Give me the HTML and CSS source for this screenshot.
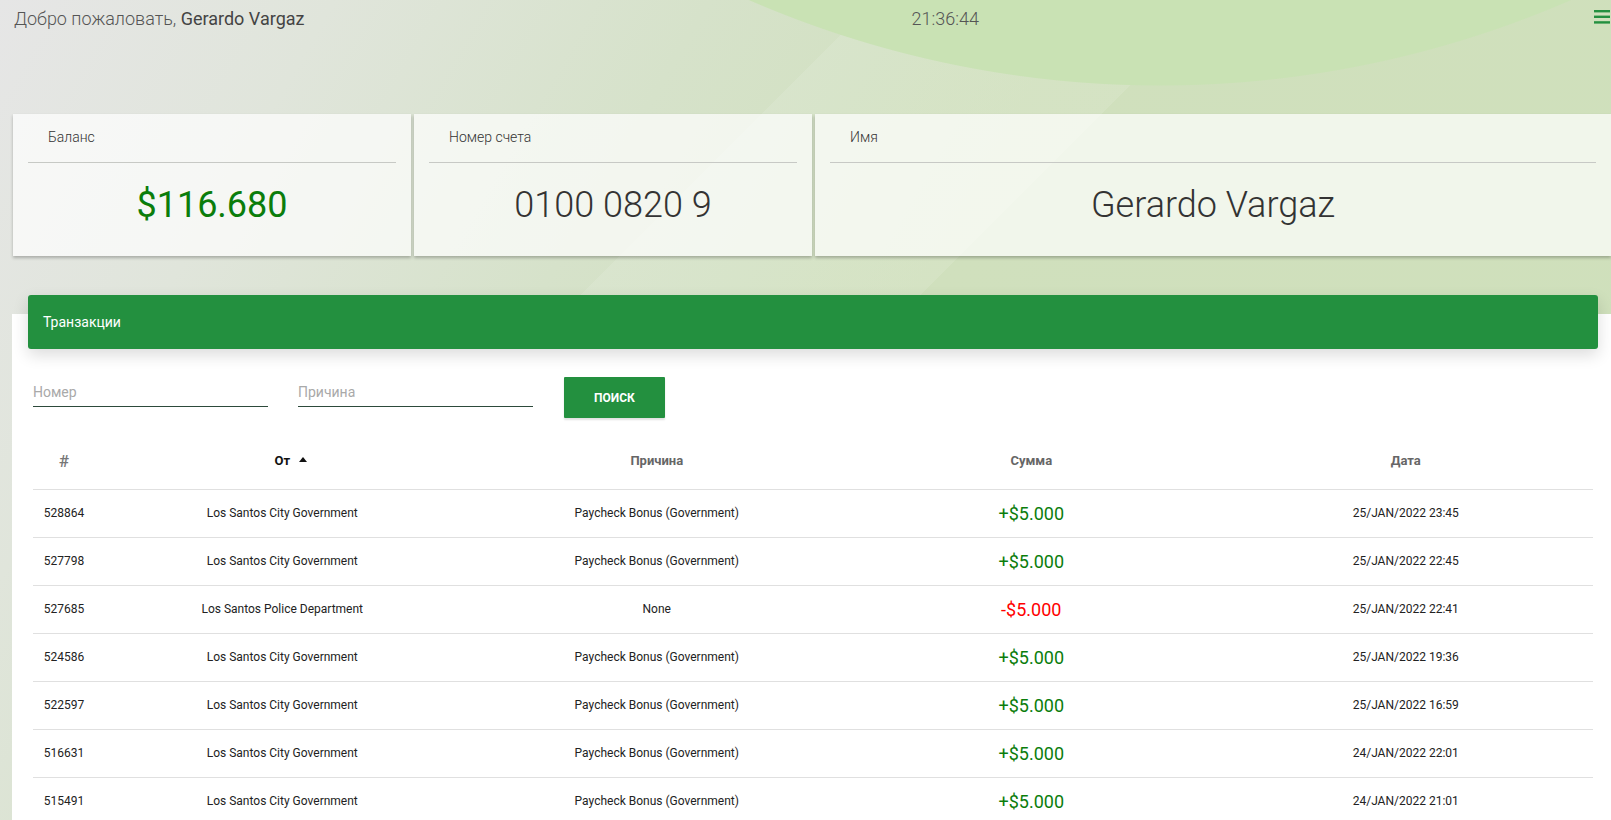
FILE: index.html
```html
<!DOCTYPE html>
<html lang="ru">
<head>
  <meta charset="UTF-8">
  <title>Банк</title>
  <link rel="stylesheet" href="styles.css">
</head>
<body>
  <!-- Верхняя строка: приветствие, часы, меню -->
  <header class="topbar">
    <div class="welcome">Добро пожаловать, <span class="welcome-name">Gerardo Vargaz</span></div>
    <div class="clock" id="clock">21:36:44</div>
    <button class="menu-btn" type="button" aria-label="Меню">
      <svg width="16" height="14" viewBox="0 0 16 14">
        <rect x="0" y="0" width="16" height="2.4" fill="#23903f"/>
        <rect x="0" y="5.6" width="16" height="2.4" fill="#23903f"/>
        <rect x="0" y="11.2" width="16" height="2.4" fill="#23903f"/>
      </svg>
    </button>
  </header>

  <!-- Карточки с информацией о счёте -->
  <section class="info-cards">
    <div class="info-card">
      <div class="info-title">Баланс</div>
      <div class="info-value balance">$116.680</div>
    </div>
    <div class="info-card">
      <div class="info-title">Номер счета</div>
      <div class="info-value">0100 0820 9</div>
    </div>
    <div class="info-card">
      <div class="info-title">Имя</div>
      <div class="info-value">Gerardo Vargaz</div>
    </div>
  </section>

  <!-- Блок транзакций -->
  <section class="transactions">
    <div class="transactions-header">Транзакции</div>

    <form class="search-row">
      <input class="search-input" type="text" placeholder="Номер">
      <input class="search-input" type="text" placeholder="Причина">
      <button class="search-btn" type="button">Поиск</button>
    </form>

    <table class="tx-table">
      <colgroup>
        <col class="col-id">
        <col><col><col><col>
      </colgroup>
      <thead>
        <tr>
          <th class="th-id">#</th>
          <th class="th-sorted"><span class="sort-label">От</span></th>
          <th>Причина</th>
          <th>Сумма</th>
          <th>Дата</th>
        </tr>
      </thead>
      <tbody>
        <tr><td>528864</td><td>Los Santos City Government</td><td>Paycheck Bonus (Government)</td><td class="amount plus">+$5.000</td><td>25/JAN/2022 23:45</td></tr>
        <tr><td>527798</td><td>Los Santos City Government</td><td>Paycheck Bonus (Government)</td><td class="amount plus">+$5.000</td><td>25/JAN/2022 22:45</td></tr>
        <tr><td>527685</td><td>Los Santos Police Department</td><td>None</td><td class="amount minus">-$5.000</td><td>25/JAN/2022 22:41</td></tr>
        <tr><td>524586</td><td>Los Santos City Government</td><td>Paycheck Bonus (Government)</td><td class="amount plus">+$5.000</td><td>25/JAN/2022 19:36</td></tr>
        <tr><td>522597</td><td>Los Santos City Government</td><td>Paycheck Bonus (Government)</td><td class="amount plus">+$5.000</td><td>25/JAN/2022 16:59</td></tr>
        <tr><td>516631</td><td>Los Santos City Government</td><td>Paycheck Bonus (Government)</td><td class="amount plus">+$5.000</td><td>24/JAN/2022 22:01</td></tr>
        <tr><td>515491</td><td>Los Santos City Government</td><td>Paycheck Bonus (Government)</td><td class="amount plus">+$5.000</td><td>24/JAN/2022 21:01</td></tr>
      </tbody>
    </table>
  </section>
</body>
</html>
```

FILE: styles.css
```css
* {
  box-sizing: border-box;
}

html, body {
  height: 100%;
}

/* Фон страницы: серо-зелёный градиент с большими кругами */
body {
  margin: 0;
  overflow: hidden;
  font-family: Roboto, "Liberation Sans", Arial, sans-serif;
  color: #333;
  background:
    radial-gradient(circle at 1160px -946px, #c9e2b4 1031px, rgba(201, 226, 180, 0) 1032px),
    linear-gradient(135deg, rgba(255, 255, 255, 0) 0%, rgba(255, 255, 255, 0) 36%, rgba(255, 255, 255, 0.1) 36%, rgba(255, 255, 255, 0.1) 50%, rgba(255, 255, 255, 0) 50%),
    linear-gradient(120deg, #e6e6e6 0%, #e0e5db 16%, #d6e2ca 34%, #d0e0bd 52%, #cfe0bb 100%);
  background-color: #e4e6e1;
}

/* Верхняя строка */
.topbar {
  display: flex;
  justify-content: space-between;
  align-items: flex-start;
  padding: 6px 1px 0 14px;
  line-height: 26px;
}

.welcome {
  font-size: 18px;
  font-weight: 300;
  color: #555;
}

.welcome-name {
  font-weight: 400;
  color: #444;
}

.clock {
  font-size: 18px;
  font-weight: 300;
  color: #555;
  margin-right: 8px;
}

.menu-btn {
  background: none;
  border: none;
  padding: 4px 0 0;
  cursor: pointer;
  line-height: 0;
}

/* Карточки */
.info-cards {
  display: grid;
  grid-template-columns: 1fr 1fr 2fr;
  gap: 3px;
  margin: 82px 0 0 13px;
}

.info-card {
  background-color: rgba(255, 255, 255, 0.7);
  box-shadow: 0 2px 3px rgba(0, 0, 0, 0.25);
  padding: 0 15px;
}

.info-title {
  padding: 13px 20px 15px;
  line-height: 20px;
  font-size: 14px;
  font-weight: 300;
  color: #333;
  border-bottom: 1px solid #c7c9c5;
}

.info-value {
  padding: 21px 0 30px;
  text-align: center;
  font-size: 36px;
  font-weight: 300;
  line-height: 42px;
  color: #333;
}

.info-value.balance {
  color: #0b7d0b;
  font-weight: 400;
}

/* Транзакции */
.transactions {
  margin: 58px 0 0 12px;
  padding: 0 13px 0 16px;
  background-color: #fff;
  min-height: 600px;
}

.transactions-header {
  position: relative;
  top: -19px;
  margin-bottom: -19px;
  height: 54px;
  padding: 0 15px;
  display: flex;
  align-items: center;
  background-color: #23903f;
  color: #fff;
  font-size: 14px;
  border-radius: 3px;
  box-shadow: 0 6px 16px rgba(0, 0, 0, 0.14);
}

.search-row {
  display: flex;
  align-items: flex-start;
  gap: 30px;
  margin-top: 28px;
  padding-left: 5px;
}

.search-input {
  width: 235px;
  height: 30px;
  padding: 0;
  border: none;
  border-bottom: 1px solid #2d4a3b;
  background: transparent;
  font-family: inherit;
  font-size: 14px;
  color: #333;
  outline: none;
}

.search-input::placeholder {
  color: #a9a9a9;
}

.search-btn {
  width: 101px;
  height: 41px;
  margin-left: 1px;
  border: none;
  border-radius: 1px;
  background-color: #23903f;
  color: #fff;
  font-family: inherit;
  font-size: 12px;
  font-weight: 700;
  text-transform: uppercase;
  box-shadow: 0 2px 2px rgba(0, 0, 0, 0.12);
  cursor: pointer;
}

.tx-table {
  width: calc(100% - 10px);
  margin: 15px 0 0 5px;
  border-collapse: collapse;
  table-layout: fixed;
}

.col-id {
  width: 62px;
}

.tx-table th {
  height: 56px;
  font-size: 13px;
  font-weight: 700;
  color: #666;
  text-align: center;
}

.tx-table th.th-id {
  font-size: 17px;
  font-weight: 500;
  color: #777;
}

.tx-table th.th-sorted {
  color: #111;
}

.sort-label {
  position: relative;
}

/* Стрелка сортировки */
.sort-label::after {
  content: "";
  position: absolute;
  left: calc(100% + 9px);
  top: 4px;
  border-left: 4px solid transparent;
  border-right: 4px solid transparent;
  border-bottom: 5px solid #111;
}

.tx-table tr {
  border-bottom: 1px solid #e0e0e0;
}

.tx-table tbody tr:last-child {
  border-bottom: none;
}

.tx-table td {
  height: 48px;
  padding: 0;
  font-size: 12px;
  color: #222;
  text-align: center;
}

.tx-table td.amount {
  font-size: 18px;
}

.amount.plus {
  color: #0b7d0b;
}

.amount.minus {
  color: #ff0000;
}
```
